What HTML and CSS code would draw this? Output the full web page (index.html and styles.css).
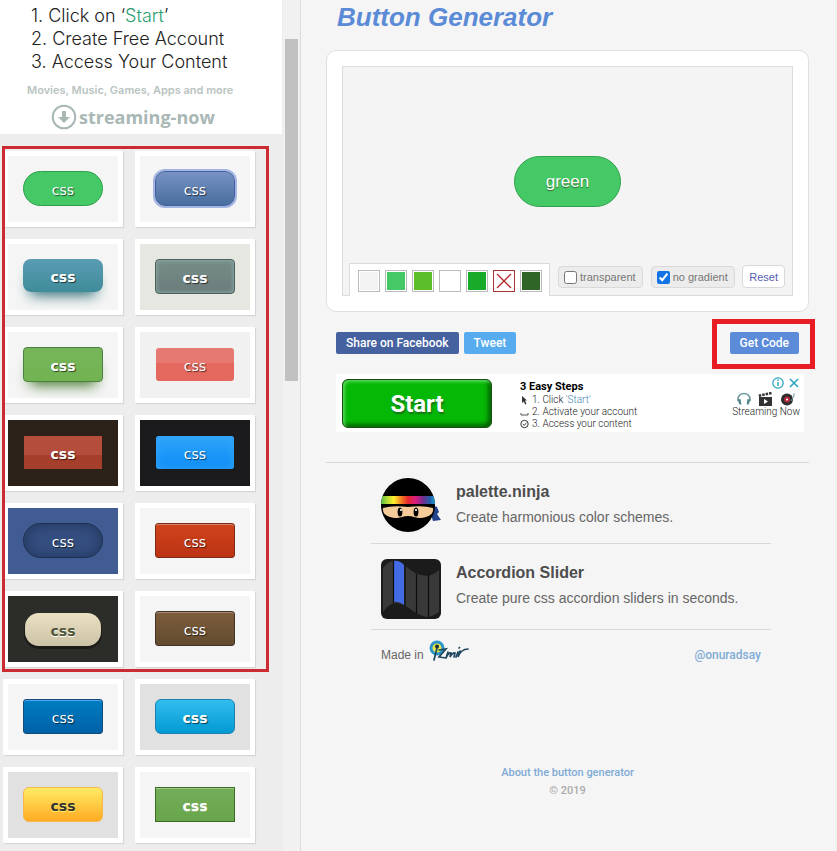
FILE: index.html
```html
<!DOCTYPE html>
<html lang="en">
<head>
	<meta charset="utf-8">
	<title>Button Generator</title>
	<link rel="stylesheet" href="styles.css">
</head>
<body>

<aside class="sidebar">
	<div class="side-content">
		<div class="side-ad">
			<ol class="ad-steps">
				<li>1. Click on ‘<a href="#">Start</a>’</li>
				<li>2. Create Free Account</li>
				<li>3. Access Your Content</li>
			</ol>
			<p class="ad-note">Movies, Music, Games, Apps and more</p>
			<div class="ad-logo">
				<svg width="26" height="26" viewBox="0 0 26 26"><circle cx="13" cy="13" r="11.3" fill="none" stroke="#a9b8b5" stroke-width="2"/><path d="M11 7h4v6h4l-6 6-6-6h4z" fill="#a9b8b5"/></svg>
				<span>streaming-now</span>
			</div>
		</div>

		<div class="gallery">
			<div class="card"><div class="swatch"><button class="btn green">css</button></div></div>
			<div class="card"><div class="swatch"><button class="btn ring">css</button></div></div>
			<div class="card"><div class="swatch"><button class="btn bold teal">css</button></div></div>
			<div class="card"><div class="swatch bg-sand"><button class="btn bold slate">css</button></div></div>
			<div class="card"><div class="swatch"><button class="btn bold grass">css</button></div></div>
			<div class="card"><div class="swatch bg-light"><button class="btn salmon">css</button></div></div>
			<div class="card"><div class="swatch bg-brown"><button class="btn bold brick">css</button></div></div>
			<div class="card"><div class="swatch bg-black"><button class="btn sky">css</button></div></div>
			<div class="card"><div class="swatch bg-blue"><button class="btn navy">css</button></div></div>
			<div class="card"><div class="swatch"><button class="btn red">css</button></div></div>
			<div class="card"><div class="swatch bg-dark"><button class="btn bold cream">css</button></div></div>
			<div class="card"><div class="swatch"><button class="btn brown">css</button></div></div>
			<div class="card"><div class="swatch"><button class="btn royal">css</button></div></div>
			<div class="card"><div class="swatch bg-gray"><button class="btn bold cyan">css</button></div></div>
			<div class="card"><div class="swatch bg-gray"><button class="btn bold yellow">css</button></div></div>
			<div class="card"><div class="swatch"><button class="btn bold leaf">css</button></div></div>
			<div class="mark mark-list"></div>
		</div>
	</div>
	<div class="track"><div class="thumb"></div></div>
</aside>

<main class="main">
	<h1>Button Generator</h1>

	<section class="preview">
		<div class="stage">
			<button class="sample">green</button>
			<div class="tools">
				<div class="colors">
					<button class="color c-none" aria-label="background"></button>
					<button class="color c-mint" aria-label="top color"></button>
					<button class="color c-lime" aria-label="bottom color"></button>
					<button class="color c-white" aria-label="text color"></button>
					<button class="color c-green" aria-label="border color"></button>
					<button class="color c-off" aria-label="no shadow"><svg width="18" height="18" viewBox="0 0 18 18"><path d="M2 2l14 14M16 2L2 16" stroke="#b02a2a" stroke-width="1.3"/></svg></button>
					<button class="color c-forest" aria-label="text shadow"></button>
				</div>
				<label class="check"><input type="checkbox">transparent</label>
				<label class="check"><input type="checkbox" checked>no gradient</label>
				<button class="reset">Reset</button>
			</div>
		</div>
	</section>

	<div class="actions">
		<a class="share fb" href="#">Share on Facebook</a>
		<a class="share tw" href="#">Tweet</a>
		<div class="get">
			<button class="share code">Get Code</button>
			<div class="mark mark-code"></div>
		</div>
	</div>

	<div class="banner">
		<button class="start">Start</button>
		<div class="steps">
			<b>3 Easy Steps</b>
			<p><svg width="9" height="10" viewBox="0 0 9 10"><path d="M2 1l5 4.600H5L6.500 9l-1.500.5L4 6.500 2 8z" fill="#333"/></svg><span>1. Click <a href="#">'Start'</a></span></p>
			<p><svg width="9" height="10" viewBox="0 0 9 10"><path d="M1 6v2h7V6" fill="none" stroke="#555"/></svg>2. Activate your account</p>
			<p><svg width="9" height="10" viewBox="0 0 9 10"><circle cx="4.500" cy="5" r="3.700" fill="none" stroke="#333"/><path d="M2.800 5l1.400 1.300L6.500 4" fill="none" stroke="#333"/></svg>3. Access your content</p>
		</div>
		<div class="stream">
			<div class="ad-choices">
				<svg width="12" height="12" viewBox="0 0 12 12"><circle cx="6" cy="6" r="5.200" fill="none" stroke="#21a3bd" stroke-width="1.200"/><path d="M6 5v4M6 2.600v1.300" stroke="#21a3bd" stroke-width="1.400"/></svg>
				<svg width="12" height="12" viewBox="0 0 12 12"><path d="M2 2l8 8M10 2l-8 8" stroke="#21a3bd" stroke-width="1.500"/></svg>
			</div>
			<div class="media">
				<svg width="16" height="14" viewBox="0 0 16 14"><path d="M2 9V7a6 5.500 0 0 1 12 0v2" fill="none" stroke="#6d9a9c" stroke-width="1.500"/><path d="M1.500 7.500l3-.5.8 5.500H3.500zM14.500 7.500l-3-.5-.8 5.500h1.800z" fill="#4f8286"/></svg>
				<svg width="16" height="14" viewBox="0 0 16 14"><path d="M1 5h13v9H1z" fill="#333"/><path d="M.8 3.800L13.500 1" stroke="#333" stroke-width="2.500" stroke-dasharray="2.500 1"/><path d="M6 7l4 2.500L6 12z" fill="#fff"/></svg>
				<svg width="16" height="14" viewBox="0 0 16 14"><circle cx="7" cy="7.500" r="6" fill="#2d2d2d"/><circle cx="7" cy="7.500" r="3" fill="#b3283c"/><circle cx="7" cy="7.500" r="1" fill="#fff"/><path d="M14 1v3l-3 5" fill="none" stroke="#67a0a2"/></svg>
			</div>
			<span>Streaming Now</span>
		</div>
	</div>

	<section class="links">
		<article class="item">
			<svg class="pic" width="60" height="54" viewBox="0 0 60 54">
				<defs>
					<linearGradient id="band"><stop offset="0" stop-color="#55bd43"/><stop offset=".12" stop-color="#b6dc35"/><stop offset=".24" stop-color="#fff02b"/><stop offset=".38" stop-color="#f47b25"/><stop offset=".5" stop-color="#e5282c"/><stop offset=".64" stop-color="#d91c7f"/><stop offset=".78" stop-color="#72308f"/><stop offset=".9" stop-color="#235ca8"/><stop offset="1" stop-color="#1f9ad1"/></linearGradient>
					<clipPath id="head"><circle cx="27" cy="27" r="27"/></clipPath>
				</defs>
				<path d="M51 27l5 2 2 5-2 2 4 6-8 1-3-9z" fill="#21418a"/>
				<circle cx="27" cy="27" r="27" fill="#000"/>
				<g clip-path="url(#head)">
					<path d="M0 18h54v8H0z" fill="url(#band)"/>
				</g>
				<path d="M2 30q10-3 25-1 15-2 25 1 1 7-7 9-6 2-12 0-6-2-12 0-6 2-12 0-8-2-7-9z" fill="#f4cb99"/>
				<ellipse cx="19" cy="34" rx="2.400" ry="4.500"/><ellipse cx="35" cy="34" rx="2.400" ry="4.500"/>
				<circle cx="20" cy="32" r="1.100" fill="#fff"/><circle cx="35" cy="32" r="1.100" fill="#fff"/>
			</svg>
			<div>
				<h2>palette.ninja</h2>
				<p>Create harmonious color schemes.</p>
			</div>
		</article>
		<article class="item">
			<svg class="pic" width="60" height="60" viewBox="0 0 60 60">
				<rect width="60" height="60" rx="6" fill="#1b1b1b"/>
				<path d="M2 9Q7 2 13 2q6 0 14 7 7 6 13 7 9 3 18-5v42q-7 5-12 5-8-1-18-9-11-7-17-4-5 2-9 8z" fill="#393939"/>
				<path d="M13 2q5-1 10 4v40q-5-4-10-3z" fill="#426be5"/>
				<path d="M12.500 2v42M24 6v41M35.500 15v40M47.500 15v43" stroke="#0d0d0d" stroke-width="1.200"/>
			</svg>
			<div>
				<h2>Accordion Slider</h2>
				<p>Create pure css accordion sliders in seconds.</p>
			</div>
		</article>
		<div class="credits">
			<span class="made">Made in
				<svg width="42" height="22" viewBox="0 0 42 22">
					<circle cx="8" cy="8" r="6" fill="#e9e84a" stroke="#2b94c8" stroke-width="3"/>
					<circle cx="8" cy="6.500" r="2" fill="#182b36"/>
					<path d="M8 8L5 20M10 10l7-1-7 8 7 1M19 12l-2 6q3-6 5-5l-1 4q3-5 5-4l-1 4M29 12l-2 5M31 11l-2 6q3-8 10-8M30 8l.5-.5" fill="none" stroke="#20485f" stroke-width="1.700" stroke-linecap="round"/>
				</svg>
			</span>
			<a href="#">@onuradsay</a>
		</div>
	</section>

	<footer class="footer">
		<a href="#">About the button generator</a>
		<p>© 2019</p>
	</footer>
</main>

</body>
</html>
```

FILE: styles.css
```css
* {
	box-sizing: border-box;
}
body {
	display: flex;
	min-height: 100vh;
	margin: 0;
	background: #f5f5f5;
	color: #666;
	font-family: "Liberation Sans", Arial, sans-serif;
	font-size: 12px;
}
h1, h2, p, ol {
	margin: 0;
	padding: 0;
}
a {
	color: #7fabd6;
	text-decoration: none;
}
button {
	padding: 0;
	font-family: inherit;
	cursor: pointer;
}
svg {
	display: block;
	flex: none;
}

/* sidebar */
.sidebar {
	display: flex;
	flex: 0 0 301px;
	background: #ededed;
	border-right: 1px solid #dcdcdc;
}
.side-content {
	flex: 1;
}
.track {
	flex: 0 0 17px;
	padding: 39px 2px 0;
	background: #f1f1f1;
}
.thumb {
	height: 342px;
	background: #c1c1c1;
}
.side-ad {
	height: 134px;
	margin-right: 1px;
	padding-top: 4px;
	background: #fff;
}
.ad-steps {
	padding-left: 31px;
	list-style: none;
	color: #222;
	font-family: Inter, sans-serif;
	font-size: 18px;
	font-weight: 300;
	line-height: 23px;
}
.ad-steps a {
	color: #2a9d74;
}
.ad-note {
	margin-top: 9px;
	padding-left: 27px;
	color: #b9c4c1;
	font-family: Inter, sans-serif;
	font-size: 11px;
	font-weight: 600;
	line-height: 16px;
}
.ad-logo {
	display: flex;
	align-items: center;
	gap: 2px;
	margin-top: 6px;
	padding-left: 51px;
	color: #a9b8b5;
	font-family: "Open Sans", sans-serif;
	font-size: 18px;
	font-weight: 700;
	line-height: 26px;
}

.gallery {
	position: relative;
	display: grid;
	grid-template-columns: 120px 120px;
	gap: 12px;
	padding: 17px 0 8px 3px;
}
.card {
	padding: 5px;
	background: #fff;
	box-shadow: 1px 1px 1px #d6d6d6;
}
.swatch {
	display: flex;
	align-items: flex-start;
	justify-content: center;
	height: 66px;
	padding-top: 15px;
	background: #f5f5f5;
}
.bg-sand { background: #e7e7e1; }
.bg-light { background: #f1f1f1; }
.bg-brown { background: #2b2118; }
.bg-black { background: #1b1b1d; }
.bg-blue { background: #405c92; }
.bg-dark { background: #2c2c28; }
.bg-gray { background: #e1e1e1; }

.btn {
	width: 80px;
	height: 35px;
	padding-top: 2px;
	border: 1px solid transparent;
	border-radius: 3px;
	color: #fff;
	font-family: "DejaVu Sans", Verdana, sans-serif;
	font-size: 14px;
	line-height: 16px;
	text-shadow: 1px 1px 1px rgba(0,0,0,.6);
}
.bold {
	font-weight: bold;
}
.green {
	background: #45c967;
	border-color: #2f9f4a;
	border-radius: 18px;
}
.ring {
	background: linear-gradient(#7992c4, #476e9e);
	border-color: #4560a0;
	border-radius: 10px;
	box-shadow: 0 0 0 2px #a3b5e3;
}
.teal {
	height: 33px;
	background: linear-gradient(#599bb3, #408c99);
	border: 0;
	border-radius: 8px;
	box-shadow: 0 10px 14px -7px #276873;
}
.slate {
	background: linear-gradient(#768d87, #6c7c7c);
	border-color: #4c615b;
	border-radius: 4px;
	box-shadow: inset 0 0 4px #91b8b3;
}
.grass {
	background: linear-gradient(#77b55a, #72b352);
	border-color: #4b8040;
	border-radius: 4px;
	box-shadow: 0 10px 14px -7px #3e7327;
}
.salmon, .brick, .sky {
	width: 78px;
	height: 33px;
	margin-top: 1px;
	border: 0;
}
.salmon {
	background: linear-gradient(#e67a73 45%, #e4685d 45%);
}
.brick {
	background: linear-gradient(#b54d3d 57%, #a53e2a 57%);
	border-radius: 0;
}
.sky {
	background: linear-gradient(#2fa5fa, #0d8cf8);
	box-shadow: inset 0 0 8px #36a5f5;
}
.navy {
	background: #354f80;
	border-color: #1f2f4f;
	border-radius: 18px;
	box-shadow: inset 0 0 12px 3px #263c65;
}
.red {
	background: linear-gradient(#d0451b, #bc3315);
	border-color: #7d2a16;
	box-shadow: inset 0 1px 0 #cf866c;
}
.cream {
	width: 76px;
	height: 33px;
	margin-top: 2px;
	background: linear-gradient(#eae0c2, #ccc2a6);
	border: 0;
	border-radius: 14px;
	box-shadow: 0 2px 0 1px #1c1b18;
	color: #505739;
	text-shadow: 0 1px 0 #fff;
}
.brown {
	background: linear-gradient(#7d5d3b, #634b30);
	border-color: #453423;
	box-shadow: inset 0 1px 0 #a6827e;
}
.royal {
	background: linear-gradient(#007dc1, #0061a7);
	border-color: #124d77;
	box-shadow: inset 0 1px 0 #54a3f7;
}
.cyan {
	background: linear-gradient(#33bdef, #019ad2);
	border-color: #1f80b0;
	border-radius: 6px;
}
.yellow {
	background: linear-gradient(#ffec64, #ffab23);
	border-color: #f3b94a;
	border-radius: 6px;
	color: #333;
	text-shadow: 0 1px 0 #ffee66;
}
.leaf {
	background: linear-gradient(#74ad5a, #68a54b);
	border-color: #3b6e22;
	border-radius: 0;
	box-shadow: inset 0 1px 0 #9acc85;
	text-shadow: 0 1px 0 #92b879;
}

/* red highlight frames drawn over the page */
.mark {
	position: absolute;
	pointer-events: none;
}
.mark-list {
	top: 12px;
	left: 2px;
	width: 267px;
	height: 526px;
	border: 3px solid #cc2b31;
}
.mark-code {
	top: -13px;
	right: -16px;
	bottom: -15px;
	left: -18px;
	border: 5px solid #e81c24;
}

/* main column */
.main {
	flex: 1;
	min-width: 0;
	padding: 0 26px 0 25px;
	border-right: 2px solid #f0f0f0;
}
h1 {
	padding-left: 11px;
	color: #5b8bd7;
	font-size: 26px;
	font-style: italic;
	line-height: 34px;
}
.preview {
	margin-top: 16px;
	padding: 15px;
	background: #fff;
	border: 1px solid #e0e0e0;
	border-radius: 10px;
}
.stage {
	display: flex;
	flex-direction: column;
	align-items: center;
	padding-top: 89px;
	background: #f4f4f4;
	border: 1px solid #dcdcdc;
	border-bottom: 0;
}
.sample {
	height: 51px;
	padding: 0 31px;
	background: #45c967;
	border: 1px solid #2fa149;
	border-radius: 26px;
	color: #fff;
	font-size: 17px;
	text-shadow: 0 1px 1px #2f6627;
}
.tools {
	display: flex;
	align-items: flex-start;
	align-self: stretch;
	margin-top: 56px;
	padding: 0 7px 0 6px;
	background: linear-gradient(#dcdcdc, #dcdcdc) bottom / 100% 1px no-repeat;
}
.colors {
	display: flex;
	gap: 5px;
	margin-right: 8px;
	padding: 6px 7px 4px 8px;
	background: #fff;
	border: 1px solid #dcdcdc;
	border-bottom: 0;
}
.color {
	width: 22px;
	height: 22px;
	padding: 1px;
	border: 1px solid #bbb;
	background-clip: content-box;
	background-color: #fff;
}
.c-none { background-color: #f3f3f3; }
.c-mint { background-color: #45c967; }
.c-lime { background-color: #5cbf2a; }
.c-green { background-color: #18ab29; }
.c-off { border-color: #a33; }
.c-forest { background-color: #2f6627; }
.check {
	display: flex;
	align-items: center;
	gap: 3px;
	height: 22px;
	margin: 3px 8px 0 0;
	padding: 0 6px 0 5px;
	background: #ececec;
	border: 1px solid #d9d9d9;
	border-radius: 4px;
	color: #777;
	font-size: 11px;
	white-space: nowrap;
}
.check + .reset,
.check:nth-child(3) {
	margin-right: 0;
}
.check input {
	width: 13px;
	height: 13px;
	margin: 0;
	accent-color: #1273e6;
}
.reset {
	height: 23px;
	margin: 2px 0 0 auto;
	padding: 0 6px;
	background: #fff;
	border: 1px solid #d9d9d9;
	border-radius: 4px;
	color: #5560b0;
	font-size: 11px;
}

.actions {
	display: flex;
	gap: 5px;
	margin: 20px 10px;
}
.share {
	display: block;
	height: 22px;
	padding: 0 10px;
	border: 0;
	border-radius: 2px;
	color: #fff;
	font-family: Roboto, sans-serif;
	font-size: 12px;
	font-weight: 500;
	line-height: 22px;
}
.fb { background: #4661a0; }
.tw { background: #56acee; }
.code { background: #5b8bd9; }
.get {
	position: relative;
	margin-left: auto;
}

.banner {
	display: flex;
	max-width: 468px;
	height: 58px;
	margin-left: 10px;
	padding: 0 4px 0 6px;
	background: #fff;
	color: #222;
	font-family: Roboto, sans-serif;
	font-size: 10px;
	font-weight: 300;
	line-height: 12px;
}
.start {
	width: 150px;
	height: 49px;
	margin: 5px 28px 0 0;
	background: #06b806;
	border: 1px solid #174d17;
	border-radius: 6px;
	box-shadow: inset 2px 2px 3px #55d655, inset -3px -3px 4px #046304;
	color: #fff;
	font-size: 24px;
	font-weight: bold;
	text-shadow: 1px 2px 2px #157015;
}
.steps {
	padding-top: 5px;
}
.steps b {
	display: block;
	color: #000;
	font-size: 11px;
	font-weight: bold;
	line-height: 15px;
}
.steps p {
	display: flex;
	align-items: center;
	gap: 3px;
	line-height: 12px;
}
.steps a {
	color: #3f7fae;
}
.stream {
	display: flex;
	flex-direction: column;
	align-items: center;
	margin-left: auto;
	padding-top: 3px;
}
.ad-choices {
	display: flex;
	align-self: flex-end;
	gap: 4px;
}
.media {
	display: flex;
	gap: 6px;
	margin-top: 3px;
}

.links {
	margin-top: 30px;
	padding: 0 38px 0 45px;
	border-top: 1px solid #d9d9d9;
}
.item {
	display: flex;
	gap: 15px;
	padding: 15px 10px 10px;
	border-bottom: 1px solid #d9d9d9;
}
.item:first-child {
	padding-bottom: 11px;
}
h2 {
	padding-top: 2px;
	color: #4d4d4d;
	font-size: 16px;
	line-height: 24px;
}
.item p {
	font-size: 14px;
	line-height: 26px;
}
.credits {
	display: flex;
	justify-content: space-between;
	padding: 10px 10px 0;
	line-height: 30px;
}
.made {
	display: flex;
	gap: 5px;
}
.credits a {
	font-family: Roboto, sans-serif;
	font-weight: 500;
}
.footer {
	margin-top: 94px;
	color: #aaa;
	font-family: Roboto, sans-serif;
	font-size: 11px;
	font-weight: 500;
	line-height: 18px;
	text-align: center;
}
```
